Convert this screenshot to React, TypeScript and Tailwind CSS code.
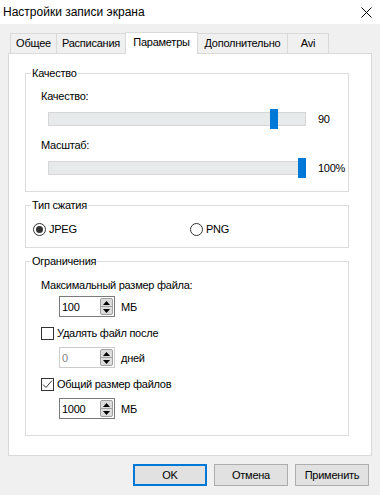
import React from "react";

function Spin({ value, disabled }: { value: string; disabled?: boolean }) {
  return (
    <div
      className={
        disabled
          ? "w-[56px] h-[21px] border border-[#cccccc] text-[#838383] bg-white flex items-center justify-between pl-[2px] pr-[1px]"
          : "w-[56px] h-[21px] border border-[#7a7a7a] text-black bg-white flex items-center justify-between pl-[2px] pr-[1px]"
      }
    >
      <span className="leading-[16px]">{value}</span>
      <div className="w-[13px] h-[17px] rounded-[2px] border border-[#a0a0a0] bg-[#dcdcdc] flex flex-col">
        <div className="h-[8px] flex items-center justify-center border-b border-[#a0a0a0]">
          <svg width="7" height="4" viewBox="0 0 7 4">
            <polygon points="0,4 3.5,0 7,4" fill="#000" />
          </svg>
        </div>
        <div className="flex-1 flex items-center justify-center">
          <svg width="7" height="4" viewBox="0 0 7 4">
            <polygon points="0,0 3.5,4 7,0" fill="#000" />
          </svg>
        </div>
      </div>
    </div>
  );
}

function Check({ checked }: { checked?: boolean }) {
  return (
    <div className="w-[13px] h-[13px] border border-[#333333] bg-white flex items-center justify-center shrink-0">
      {checked && (
        <svg width="11" height="11" viewBox="0 0 11 11">
          <polyline points="1,5.5 4,8.5 10,1.5" fill="none" stroke="#333" strokeWidth="1" />
        </svg>
      )}
    </div>
  );
}

function Radio({ checked }: { checked?: boolean }) {
  return (
    <div className="w-[13px] h-[13px] rounded-full border border-[#333333] bg-white flex items-center justify-center shrink-0">
      {checked && <div className="w-[7px] h-[7px] rounded-full bg-[#333333]" />}
    </div>
  );
}

function Slider({ thumb, value }: { thumb: number; value: string }) {
  return (
    <div className="h-[20px] flex items-center pl-[22px]">
      <div className="relative w-[258px] h-[14px] border border-[#d6d6d6] bg-[#e7eaea]">
        <div
          className="absolute top-[-4px] w-[8px] h-[20px] bg-[#0078d7]"
          style={{ left: thumb }}
        />
      </div>
      <span className="ml-[12px] leading-[16px]">{value}</span>
    </div>
  );
}

function Group({
  title,
  className,
  children,
}: {
  title: string;
  className: string;
  children: React.ReactNode;
}) {
  return (
    <div className={className}>
      <span className="absolute top-[-9px] left-[5px] px-[1px] bg-white leading-[16px]">
        {title}
      </span>
      {children}
    </div>
  );
}

export default function App() {
  const tabs = [
    { t: "Общее", w: "w-[47px]" },
    { t: "Расписания", w: "w-[70px]" },
    { t: "Параметры", w: "w-[73px]", sel: true },
    { t: "Дополнительно", w: "w-[91px]" },
    { t: "Avi", w: "w-[42px]" },
  ];
  return (
    <div className="w-[380px] h-[495px] bg-[#f0f0f0] flex flex-col text-[11px] tracking-[-0.25px] text-black font-['Liberation_Sans',Arial,sans-serif] overflow-hidden">
      <div className="h-[24px] bg-white flex items-center justify-between pl-[3px] pr-[8px]">
        <span className="leading-[16px] text-[12px] tracking-normal">Настройки записи экрана</span>
        <svg width="11" height="11" viewBox="0 0 11 11">
          <path d="M0.5 0.5 L10.5 10.5 M10.5 0.5 L0.5 10.5" stroke="#000" strokeWidth="1" />
        </svg>
      </div>
      <div className="px-[8px] pt-[8px]">
        <div className="flex items-end h-[21px] pl-[2px]">
          {tabs.map((tab, i) =>
            tab.sel ? (
              <div
                key={tab.t}
                className={`${tab.w} h-[22px] -mb-px -ml-px relative z-10 bg-white border border-b-0 border-[#d9d9d9] flex items-center justify-center pb-[2px]`}
              >
                {tab.t}
              </div>
            ) : (
              <div
                key={tab.t}
                className={
                  i === 0
                    ? `${tab.w} h-[20px] bg-[#f0f0f0] border border-b-0 border-[#d9d9d9] flex items-center justify-center`
                    : `${tab.w} h-[20px] -ml-px bg-[#f0f0f0] border border-b-0 border-[#d9d9d9] flex items-center justify-center`
                }
              >
                {tab.t}
              </div>
            )
          )}
        </div>
        <div className="h-[403px] border border-[#d9d9d9] bg-white flex flex-col pl-[16px]">
          <Group
            title="Качество"
            className="relative mt-[19px] w-[324px] h-[119px] border border-[#dcdcdc] pt-[14px]"
          >
            <div className="pl-[15px] leading-[16px] h-[16px]">Качество:</div>
            <div className="mt-[5px]">
              <Slider thumb={221} value="90" />
            </div>
            <div className="mt-[8px] pl-[15px] leading-[16px] h-[16px]">Масштаб:</div>
            <div className="mt-[5px]">
              <Slider thumb={249} value="100%" />
            </div>
          </Group>

          <Group
            title="Тип сжатия"
            className="relative mt-[13px] w-[324px] h-[43px] border border-[#dcdcdc] pt-[15px] pl-[7px]"
          >
            <div className="flex items-center h-[16px]">
              <div className="w-[157px] flex items-center">
                <Radio checked />
                <span className="ml-[3px] leading-[16px]">JPEG</span>
              </div>
              <div className="flex items-center">
                <Radio />
                <span className="ml-[3px] leading-[16px]">PNG</span>
              </div>
            </div>
          </Group>

          <Group
            title="Ограничения"
            className="relative mt-[13px] w-[324px] h-[175px] border border-[#dcdcdc] pt-[15px] pl-[15px]"
          >
            <div className="leading-[16px] h-[16px]">Максимальный размер файла:</div>
            <div className="mt-[3px] ml-[18px] flex items-center">
              <Spin value="100" />
              <span className="ml-[6px] leading-[16px]">МБ</span>
            </div>
            <div className="mt-[8px] h-[16px] flex items-center">
              <Check />
              <span className="ml-[3px] leading-[16px]">Удалять файл после</span>
            </div>
            <div className="mt-[6px] ml-[18px] flex items-center">
              <Spin value="0" disabled />
              <span className="ml-[6px] leading-[16px]">дней</span>
            </div>
            <div className="mt-[8px] h-[16px] flex items-center">
              <Check checked />
              <span className="ml-[3px] leading-[16px]">Общий размер файлов</span>
            </div>
            <div className="mt-[6px] ml-[18px] flex items-center">
              <Spin value="1000" />
              <span className="ml-[6px] leading-[16px]">МБ</span>
            </div>
          </Group>
        </div>
      </div>
      <div className="flex justify-end pr-[11px] mt-[8px] gap-[7px]">
        <button className="w-[74px] h-[22px] bg-[#e1e1e1] border-2 border-[#0078d7] flex items-center justify-center">
          OK
        </button>
        <button className="w-[74px] h-[22px] bg-[#e1e1e1] border border-[#adadad] flex items-center justify-center">
          Отмена
        </button>
        <button className="w-[74px] h-[22px] bg-[#e1e1e1] border border-[#adadad] flex items-center justify-center">
          Применить
        </button>
      </div>
    </div>
  );
}
